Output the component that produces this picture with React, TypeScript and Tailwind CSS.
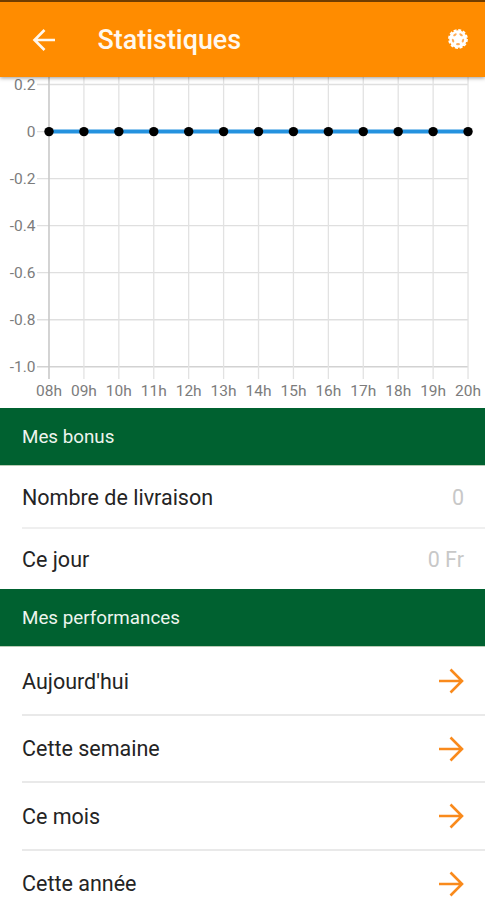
const hours = ['08h', '09h', '10h', '11h', '12h', '13h', '14h', '15h', '16h', '17h', '18h', '19h', '20h'];
const levels = ['0.2', '0', '-0.2', '-0.4', '-0.6', '-0.8', '-1.0'];
const periods = ['Aujourd\'hui', 'Cette semaine', 'Ce mois', 'Cette année'];

const xAt = (i: number) => 49 + i * 34.92;
const yAt = (i: number) => 7.5 + i * 47.05;

function BackArrow() {
  return (
    <svg width="24" height="24" viewBox="0 0 24 24" fill="none" stroke="#fff8ee" strokeWidth="2.6">
      <path d="M23 12H3.5M12.5 2L2.5 12L12.5 22" />
    </svg>
  );
}

function ForwardArrow() {
  return (
    <svg className="mb-px" width="26" height="26" viewBox="0 0 26 26" fill="none" stroke="#f98a1c" strokeWidth="2.6">
      <path d="M1 13H23.5M12.5 1.5L24 13L12.5 24.5" />
    </svg>
  );
}

function Gear() {
  return (
    <svg className="mb-px" width="22" height="22" viewBox="-11 -11 22 22">
      <circle r="8.8" fill="#fff" />
      <circle r="9.1" fill="none" stroke="#fff" strokeWidth="1.6" strokeDasharray="3 1.765" />
      {[0, 72, 144, 216, 288].map((a) => (
        <ellipse key={a} cy="5.2" rx="2" ry="1.1" fill="#ffad58" transform={`rotate(${a})`} />
      ))}
    </svg>
  );
}

function Chart() {
  return (
    <svg width="485" height="331" viewBox="0 0 485 331" className="block shrink-0 overflow-visible font-[Roboto,sans-serif]">
      {levels.map((label, i) => (
        <g key={label}>
          <path d={`M37 ${yAt(i)}H468`} stroke={i === 6 ? '#d2d2d2' : '#dfdfdf'} strokeWidth={i === 6 ? 1.6 : 1.3} />
          <text x="35.5" y={yAt(i) + 5.3} textAnchor="end" fontSize="15.5" fill="#7c7c7c">{label}</text>
        </g>
      ))}
      {hours.map((label, i) => (
        <g key={label}>
          <path d={`M${xAt(i)} 0V302`} stroke={i === 0 ? '#c9c9c9' : '#e2e2e2'} strokeWidth={i === 0 ? 1.6 : 1.3} />
          <text x={xAt(i)} y="318.5" textAnchor="middle" fontSize="15.5" fill="#7c7c7c">{label}</text>
        </g>
      ))}
      <path d="M49 54.6H468" stroke="#2492df" strokeWidth="4" />
      {hours.map((label, i) => (
        <circle key={label} cx={xAt(i)} cy="54.6" r="4.7" fill="#000" />
      ))}
    </svg>
  );
}

function SectionTitle({ children }: { children: string }) {
  return (
    <div className="flex h-[57px] shrink-0 items-center bg-[#006130] pl-[22px] pt-px text-[18.8px] text-[#edf5ee] shadow-[0_1px_0_#b9ccb5]">
      {children}
    </div>
  );
}

export default function App() {
  return (
    <div className="flex h-[900px] w-[485px] flex-col overflow-hidden bg-white font-[Roboto,sans-serif] text-[#242424]">
      <header className="relative flex h-[77px] shrink-0 items-center border-t-2 border-[#713d00] bg-[#ff8c00] pl-8 pr-4 shadow-[0_1px_4px_rgba(0,0,0,0.4)]">
        <BackArrow />
        <h1 className="ml-[41.5px] flex-1 pt-px text-[26.9px] font-medium text-[#fff8ee]">Statistiques</h1>
        <Gear />
      </header>
      <Chart />
      <SectionTitle>Mes bonus</SectionTitle>
      <div className="ml-[22px] flex h-16 shrink-0 items-center justify-between border-b-2 border-[#efefef] pr-[21px] pt-[4px] text-[21.5px]">
        <span>Nombre de livraison</span>
        <span className="text-[#c8c8c8]">0</span>
      </div>
      <div className="ml-[22px] flex h-[60px] shrink-0 items-center justify-between pr-[21px] pt-[2px] text-[21.5px]">
        <span>Ce jour</span>
        <span className="text-[#c8c8c8]">0 Fr</span>
      </div>
      <SectionTitle>Mes performances</SectionTitle>
      <div className="flex shrink-0 flex-col pt-[2px]">
        {periods.map((period) => (
          <div key={period} className="ml-[22px] flex h-[67.6px] shrink-0 items-center justify-between border-b-2 border-[#e9e9e9] pr-[21px] pt-[2px] text-[21.5px]">
            <span>{period}</span>
            <ForwardArrow />
          </div>
        ))}
      </div>
    </div>
  );
}
